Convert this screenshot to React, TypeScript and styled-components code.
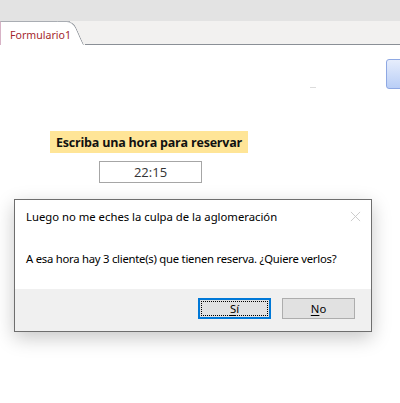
import styled, { createGlobalStyle } from 'styled-components';

const GlobalStyle = createGlobalStyle`
  html, body {
    margin: 0;
    padding: 0;
    background: #ffffff;
  }
`;

const App = () => {
    return (
        <Screen>
            <GlobalStyle />
            <TopBar />
            <TabStrip>
                <Tab>
                    <TabEar />
                    <TabLabel>Formulario1</TabLabel>
                </Tab>
                <TabRule />
            </TabStrip>

            <FormArea>
                <CommandButton />
                <Dash />
                <FieldGroup>
                    <Prompt>Escriba una hora para reservar</Prompt>
                    <TimeBox>22:15</TimeBox>
                </FieldGroup>
            </FormArea>

            {/* Message box over the form */}
            <Dialog>
                <DialogBody>
                    <TitleRow>
                        <DialogTitle>Luego no me eches la culpa de la aglomeración</DialogTitle>
                        <CloseGlyph viewBox="0 0 12 12">
                            <path d="M1 1 L11 11 M11 1 L1 11" stroke="#c8c8c8" strokeWidth="1" />
                        </CloseGlyph>
                    </TitleRow>
                    <Message>A esa hora hay 3 cliente(s) que tienen reserva. ¿Quiere verlos?</Message>
                </DialogBody>
                <ButtonBar>
                    <DialogButton $focused>
                        <FocusRing>
                            <u>S</u>í
                        </FocusRing>
                    </DialogButton>
                    <DialogButton>
                        <u>N</u>o
                    </DialogButton>
                </ButtonBar>
            </Dialog>
        </Screen>
    );
};

const Screen = styled.div`
  position: relative;
  width: 400px;
  height: 403px;
  overflow: hidden;
  background: #ffffff;
  font-family: 'Noto Sans', 'Open Sans', sans-serif;
`;

const TopBar = styled.div`
  height: 21px;
  background: #e3e3e3;
`;

const TabStrip = styled.div`
  display: flex;
  align-items: stretch;
  height: 24px;
  background: #f2f1f0;
`;

const Tab = styled.div`
  position: relative;
  display: flex;
  align-items: center;
  width: 70px;
  background: #ffffff;
  border-top: 1px solid #a9adb3;
  border-left: 1px solid #d7b3c6;
  box-sizing: border-box;
`;

const TabLabel = styled.span`
  position: relative;
  padding-left: 9px;
  padding-top: 2px;
  font-size: 10.6px;
  color: #a4262c;
  white-space: nowrap;
`;

const TabEar = styled.span`
  position: absolute;
  top: -1px;
  left: 67px;
  width: 16px;
  height: 24px;
  background: #ffffff;
  border-top: 1px solid #a9adb3;
  border-right: 1px solid #8a8f96;
  border-top-right-radius: 7px;
  transform: skewX(24deg);
  transform-origin: bottom left;
  box-sizing: border-box;
`;

const TabRule = styled.div`
  flex: 1;
  margin-left: 15px;
  border-bottom: 1px solid #8a8f96;
`;

const FormArea = styled.div`
  position: relative;
  padding-top: 86px;
`;

const CommandButton = styled.div`
  position: absolute;
  top: 14px;
  left: 386px;
  width: 30px;
  height: 30px;
  border: 1px solid #8ea8e3;
  border-radius: 3px;
  background: linear-gradient(#e6edfc, #b9cef6);
  box-sizing: border-box;
`;

const Dash = styled.div`
  position: absolute;
  top: 42px;
  left: 310px;
  width: 6px;
  height: 1px;
  background: #dcdcdc;
`;

const FieldGroup = styled.div`
  display: flex;
  flex-direction: column;
  align-items: flex-start;
  gap: 8px;
  padding-left: 50px;
`;

const Prompt = styled.div`
  width: 198px;
  height: 22px;
  display: flex;
  align-items: center;
  justify-content: center;
  background: #ffe597;
  font-family: 'Open Sans', sans-serif;
  font-weight: 700;
  font-size: 12.5px;
  color: #111111;
  letter-spacing: -0.2px;
`;

const TimeBox = styled.div`
  margin-left: 49px;
  width: 103px;
  height: 22px;
  display: flex;
  align-items: center;
  justify-content: center;
  border: 1px solid #a6a6a6;
  box-sizing: border-box;
  font-family: 'Open Sans', sans-serif;
  font-size: 13px;
  color: #333333;
`;

const Dialog = styled.div`
  position: absolute;
  left: 14px;
  top: 199px;
  width: 358px;
  height: 133px;
  display: flex;
  flex-direction: column;
  border: 1px solid #6e6e6e;
  box-sizing: border-box;
  background: #ffffff;
  box-shadow: 0 6px 18px rgba(0, 0, 0, 0.22);
`;

const DialogBody = styled.div`
  flex: 1;
  padding: 6px 10px 0 11px;
  background: #ffffff;
`;

const TitleRow = styled.div`
  display: flex;
  align-items: center;
  justify-content: space-between;
  height: 20px;
`;

const DialogTitle = styled.span`
  font-size: 11.3px;
  color: #000000;
  white-space: nowrap;
`;

const CloseGlyph = styled.svg`
  width: 11px;
  height: 11px;
`;

const Message = styled.div`
  margin-top: 25px;
  font-size: 11.3px;
  letter-spacing: -0.25px;
  color: #000000;
  white-space: nowrap;
`;

const ButtonBar = styled.div`
  display: flex;
  justify-content: flex-end;
  gap: 11px;
  height: 42px;
  padding: 9px 16px 0 0;
  box-sizing: border-box;
  background: #f0f0f0;
`;

const DialogButton = styled.div<{ $focused?: boolean }>`
  width: 73px;
  height: 21px;
  display: flex;
  align-items: center;
  justify-content: center;
  box-sizing: border-box;
  background: #e1e1e1;
  border: ${p => (p.$focused ? '2px solid #0078d7' : '1px solid #adadad')};
  font-size: 11.3px;
  color: #000000;

  u {
    text-underline-offset: 2px;
  }
`;

const FocusRing = styled.span`
  flex: 1;
  align-self: stretch;
  display: flex;
  align-items: center;
  justify-content: center;
  margin: 1px;
  border: 1px dotted #000000;
`;

export default App;
